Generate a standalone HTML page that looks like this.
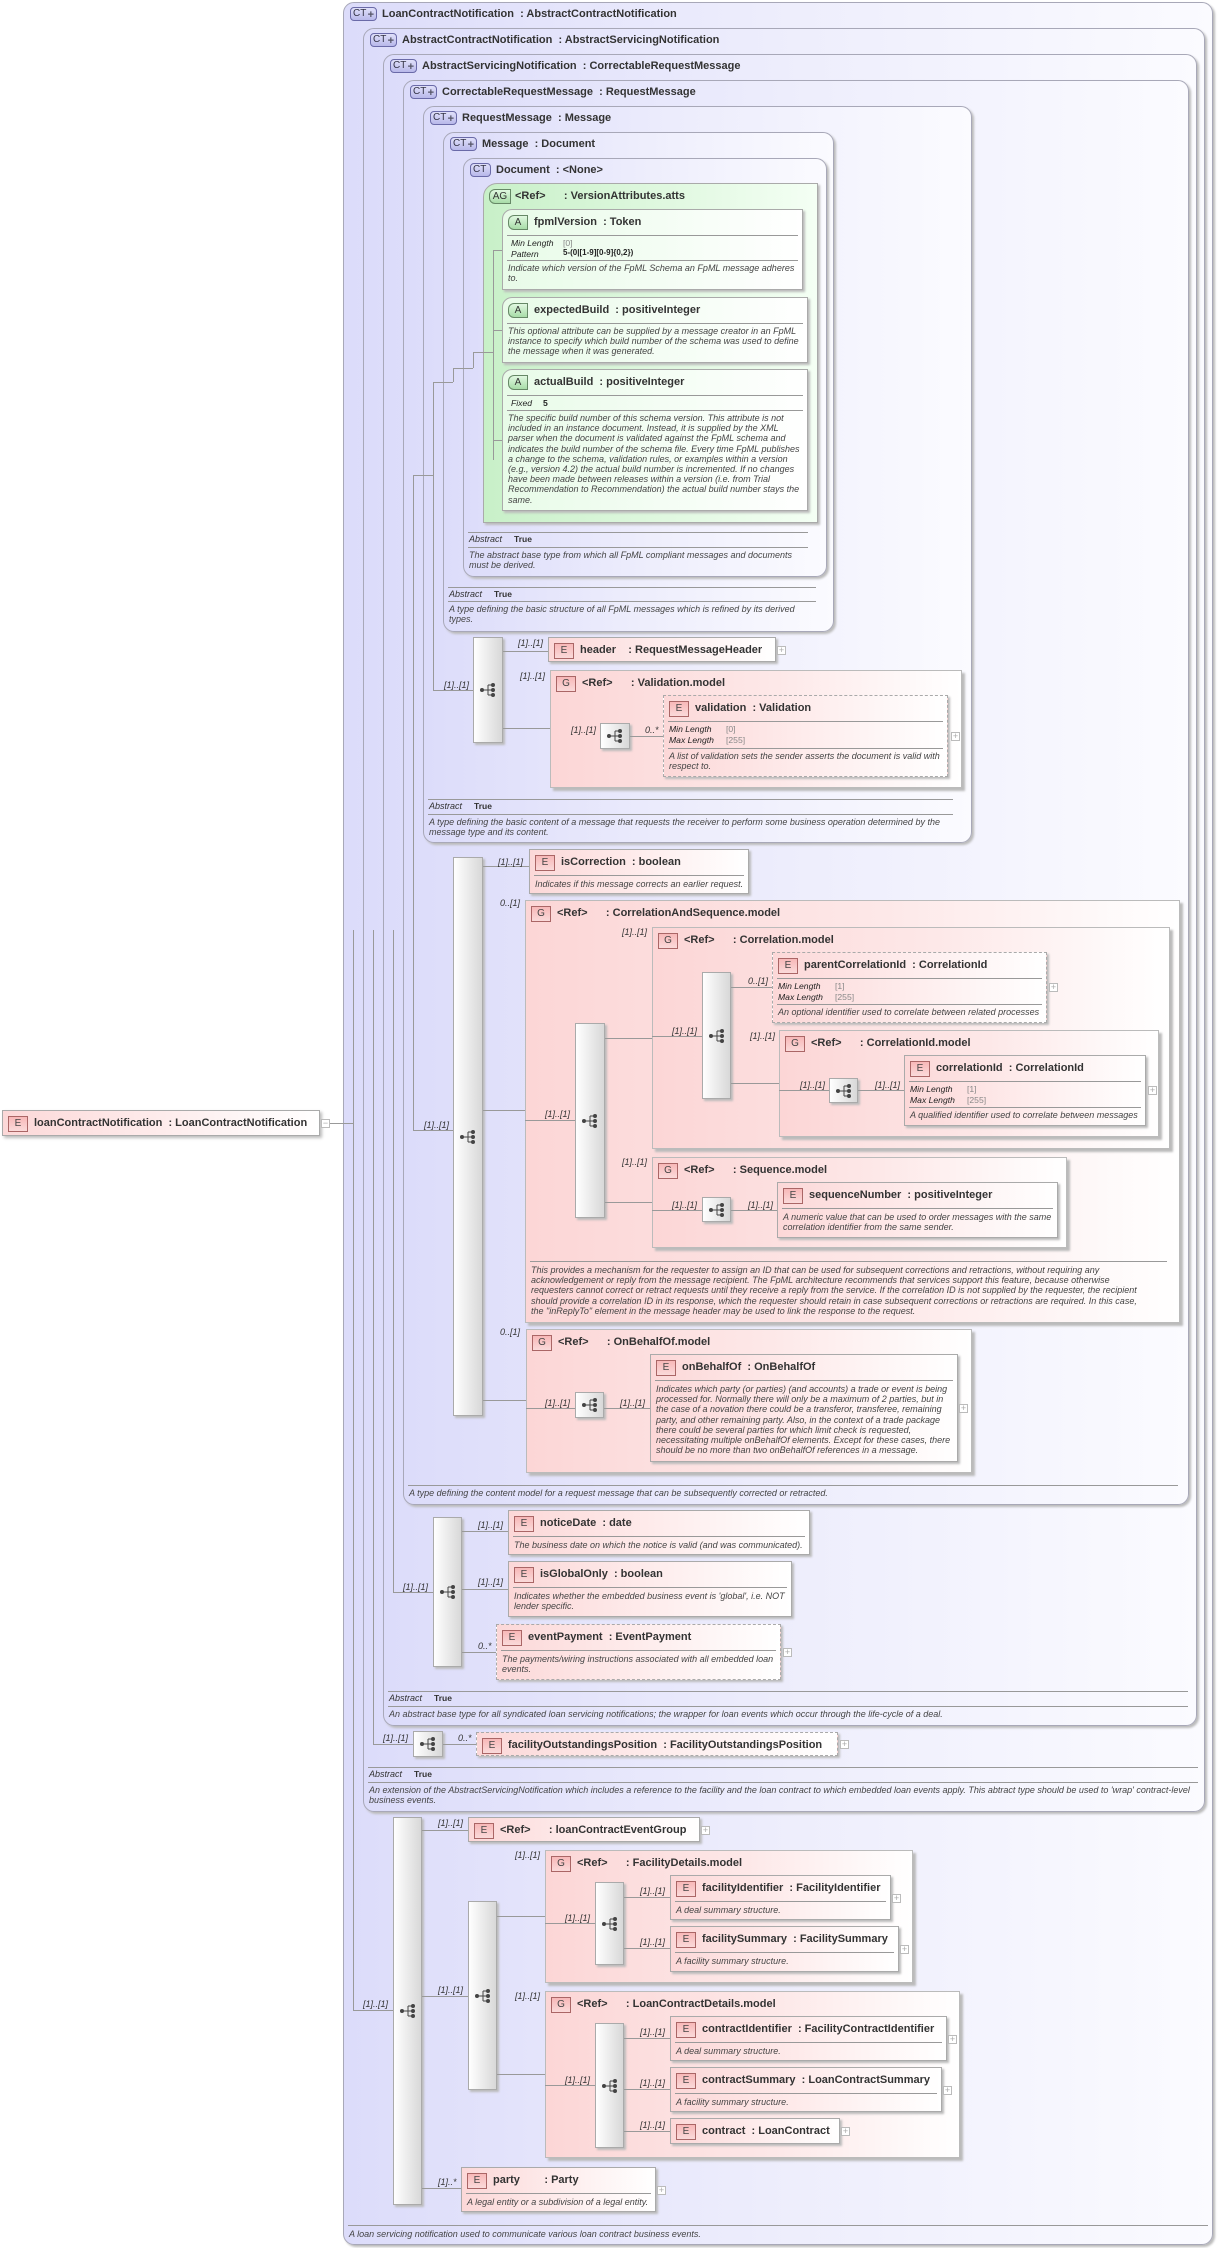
<!DOCTYPE html>
<html><head><meta charset="utf-8">
<style>
*{margin:0;padding:0;box-sizing:border-box}
body{width:1218px;height:2248px;background:#fff;position:relative;overflow:hidden;font-family:"Liberation Sans",sans-serif;color:#333}
div,span{position:absolute}
.ct{border:1px solid #a8a8b8;border-radius:11px;background:linear-gradient(90deg,#dcdcfa 0%,#ececfc 45%,#fbfbff 100%);box-shadow:2px 2px 2px #bbb}
.ctt{font-size:11px;font-weight:bold;white-space:nowrap;left:38px;top:5px}
.ctb{left:6px;top:4px;width:27px;height:14px;border:1px solid #6a6aa8;border-radius:4px;background:linear-gradient(#e0e0fa,#b8b8ea);font-size:10px;line-height:12px;color:#334;padding-left:2px}
.ctb i{position:absolute;right:2px;top:1px;font-style:normal;font-weight:bold;font-size:11px;color:#556}
.el{border:1px solid #aaa;background:linear-gradient(90deg,#fcd8d8 0%,#fef0f0 60%,#fff 100%);box-shadow:2px 2px 2px #bbb}
.dash{border:1px dashed #aaa}
.gr{border:1px solid #bbb;background:linear-gradient(90deg,#fcd6d6 0%,#fde8e8 55%,#fff 100%);box-shadow:3px 3px 2px #bbb}
.b{width:20px;height:16px;left:5px;top:5px;border:1px solid #a66;background:linear-gradient(#f8b8b8,#fadada);font-size:10px;line-height:14px;text-align:center;color:#444}
.t{font-size:11px;font-weight:bold;white-space:nowrap;left:31px;top:6px}
.hr{height:1px;background:#999;left:4px;right:4px}
.d{font-size:9px;font-style:italic;color:#444;line-height:10.2px;left:5px;right:5px}
.pl{font-size:8.6px;font-style:italic;color:#222;line-height:10.5px}
.pv{font-size:8.6px;color:#888;line-height:10.5px}
.seq{border:1px solid #aaa;background:linear-gradient(90deg,#fff,#d8d8d8);box-shadow:2px 2px 2px #bbb}
.seq svg{position:absolute;left:50%;top:50%;margin:-8px 0 0 -9px}
.lb{font-size:9px;font-style:italic;color:#333;white-space:nowrap}
.h{height:1px;background:#999}
.v{width:1px;background:#999}
.ab{font-size:9px;font-style:italic}
.ab b{font-style:normal;font-size:8.5px;margin-left:12px}
.plus{width:9px;height:9px;border:1px solid #bbb;background:#fff;font-size:9px;line-height:7px;text-align:center;color:#aaa}
.ag{border:1px solid #aaa;background:linear-gradient(90deg,#c8f0c8,#f4fff4);box-shadow:2px 2px 2px #bbb;border-radius:14px 0 0 0}
.att{border:1px solid #aaa;background:linear-gradient(90deg,#e8fbe8,#fff);box-shadow:2px 2px 2px #bbb;border-radius:10px 0 0 0}
.ab2{width:20px;height:15px;left:5px;top:5px;border:1px solid #686;border-radius:6px 0 0 6px;background:linear-gradient(#e0f8e0,#a8dca8);font-size:10px;line-height:13px;text-align:center;color:#333}
</style></head><body>

<div class="ct" style="left:343px;top:2px;width:870px;height:2243px"><span class="ctb">CT<i>+</i></span><span class="ctt">LoanContractNotification&nbsp; : AbstractContractNotification</span></div>
<div class="ct" style="left:363px;top:28px;width:842px;height:1784px"><span class="ctb">CT<i>+</i></span><span class="ctt">AbstractContractNotification&nbsp; : AbstractServicingNotification</span></div>
<div class="ct" style="left:383px;top:54px;width:814px;height:1672px"><span class="ctb">CT<i>+</i></span><span class="ctt">AbstractServicingNotification&nbsp; : CorrectableRequestMessage</span></div>
<div class="ct" style="left:403px;top:80px;width:786px;height:1425px"><span class="ctb">CT<i>+</i></span><span class="ctt">CorrectableRequestMessage&nbsp; : RequestMessage</span></div>
<div class="ct" style="left:423px;top:106px;width:549px;height:737px"><span class="ctb">CT<i>+</i></span><span class="ctt">RequestMessage&nbsp; : Message</span></div>
<div class="ct" style="left:443px;top:132px;width:391px;height:500px"><span class="ctb">CT<i>+</i></span><span class="ctt">Message&nbsp; : Document</span></div>
<div class="ct" style="left:463px;top:158px;width:364px;height:419px"><span class="ctb" style="width:21px">CT</span><span class="ctt" style="left:32px">Document&nbsp; : &lt;None&gt;</span></div>

<div class="ag" style="left:483px;top:183px;width:335px;height:340px"><span class="ab2" style="width:22px">AG</span><span class="t">&lt;Ref&gt;&nbsp;&nbsp;&nbsp;&nbsp;&nbsp; : VersionAttributes.atts</span></div>
<div class="att" style="left:502px;top:209px;width:301px;height:81px"><span class="ab2">A</span><span class="t">fpmlVersion&nbsp; : Token</span><div class="hr" style="top:25px"></div>
<span class="pl" style="left:8px;top:28px">Min Length<br>Pattern</span><span class="pv" style="left:60px;top:28px">[0]</span><span class="pv" style="left:60px;top:38px;color:#222;font-weight:bold;font-size:8px">5-(0|[1-9][0-9]{0,2})</span>
<div class="hr" style="top:50px"></div><span class="d" style="top:53px">Indicate which version of the FpML Schema an FpML message adheres to.</span></div>
<div class="att dash" style="left:502px;top:297px;width:306px;height:66px"><span class="ab2">A</span><span class="t">expectedBuild&nbsp; : positiveInteger</span><div class="hr" style="top:25px"></div>
<span class="d" style="top:28px">This optional attribute can be supplied by a message creator in an FpML instance to specify which build number of the schema was used to define the message when it was generated.</span></div>
<div class="att dash" style="left:502px;top:369px;width:306px;height:142px"><span class="ab2">A</span><span class="t">actualBuild&nbsp; : positiveInteger</span><div class="hr" style="top:25px"></div>
<span class="pl" style="left:8px;top:28px">Fixed</span><span class="pv" style="left:40px;top:28px;color:#222;font-weight:bold">5</span><div class="hr" style="top:40px"></div>
<span class="d" style="top:43px">The specific build number of this schema version. This attribute is not included in an instance document. Instead, it is supplied by the XML parser when the document is validated against the FpML schema and indicates the build number of the schema file. Every time FpML publishes a change to the schema, validation rules, or examples within a version (e.g., version 4.2) the actual build number is incremented. If no changes have been made between releases within a version (i.e. from Trial Recommendation to Recommendation) the actual build number stays the same.</span></div>
<div class="v" style="left:493px;top:250px;height:210px"></div>
<div class="h" style="left:493px;top:250px;width:9px"></div><div class="h" style="left:493px;top:330px;width:9px"></div><div class="h" style="left:493px;top:440px;width:9px"></div>
<div class="h" style="left:473px;top:352px;width:20px"></div><div class="v" style="left:473px;top:352px;height:16px"></div>
<div class="h" style="left:453px;top:368px;width:20px"></div><div class="v" style="left:453px;top:368px;height:14px"></div>
<div class="h" style="left:433px;top:382px;width:20px"></div><div class="v" style="left:433px;top:382px;height:10px"></div>
<div class="h" style="left:413px;top:475px;width:20px"></div>

<div class="h" style="left:468px;top:532px;width:340px"></div><span class="ab" style="left:469px;top:534px">Abstract<b>True</b></span><div class="h" style="left:468px;top:547px;width:340px"></div>
<span class="d" style="left:469px;top:550px;width:340px">The abstract base type from which all FpML compliant messages and documents must be derived.</span>
<div class="h" style="left:448px;top:587px;width:368px"></div><span class="ab" style="left:449px;top:589px">Abstract<b>True</b></span><div class="h" style="left:448px;top:601px;width:368px"></div>
<span class="d" style="left:449px;top:604px;width:368px">A type defining the basic structure of all FpML messages which is refined by its derived types.</span>

<div class="v" style="left:433px;top:392px;height:298px"></div>
<div class="h" style="left:433px;top:690px;width:40px"></div><span class="lb" style="left:444px;top:680px">[1]..[1]</span>
<div class="seq" style="left:473px;top:637px;width:30px;height:106px"><svg width="18" height="16"><circle cx="3" cy="8" r="2" fill="#444"/><path d="M3 8H9M9 3V13M9 3H14M9 8H14M9 13H14" stroke="#444" fill="none"/><circle cx="14" cy="3" r="2" fill="#444"/><circle cx="14" cy="8" r="2" fill="#444"/><circle cx="14" cy="13" r="2" fill="#444"/></svg></div>
<div class="h" style="left:503px;top:651px;width:45px"></div><span class="lb" style="left:518px;top:638px">[1]..[1]</span>
<div class="el" style="left:548px;top:637px;width:228px;height:25px"><span class="b">E</span><span class="t">header&nbsp;&nbsp;&nbsp; : RequestMessageHeader</span></div><span class="plus" style="left:777px;top:646px">+</span>
<div class="h" style="left:503px;top:728px;width:47px"></div><span class="lb" style="left:520px;top:671px">[1]..[1]</span>
<div class="gr" style="left:550px;top:670px;width:412px;height:118px"><span class="b">G</span><span class="t">&lt;Ref&gt;&nbsp;&nbsp;&nbsp;&nbsp;&nbsp; : Validation.model</span></div>
<span class="lb" style="left:571px;top:725px">[1]..[1]</span>
<div class="seq" style="left:600px;top:723px;width:30px;height:26px"><svg width="18" height="16"><circle cx="3" cy="8" r="2" fill="#444"/><path d="M3 8H9M9 3V13M9 3H14M9 8H14M9 13H14" stroke="#444" fill="none"/><circle cx="14" cy="3" r="2" fill="#444"/><circle cx="14" cy="8" r="2" fill="#444"/><circle cx="14" cy="13" r="2" fill="#444"/></svg></div>
<div class="h" style="left:630px;top:736px;width:33px"></div><span class="lb" style="left:645px;top:725px">0..*</span>
<div class="el dash" style="left:663px;top:695px;width:285px;height:82px"><span class="b">E</span><span class="t">validation&nbsp; : Validation</span><div class="hr" style="top:25px"></div>
<span class="pl" style="left:5px;top:28px">Min Length<br>Max Length</span><span class="pv" style="left:62px;top:28px">[0]<br>[255]</span><div class="hr" style="top:52px"></div>
<span class="d" style="top:55px">A list of validation sets the sender asserts the document is valid with respect to.</span></div><span class="plus" style="left:951px;top:732px">+</span>
<div class="h" style="left:428px;top:799px;width:525px"></div><span class="ab" style="left:429px;top:801px">Abstract<b>True</b></span><div class="h" style="left:428px;top:814px;width:525px"></div>
<span class="d" style="left:429px;top:817px;width:530px">A type defining the basic content of a message that requests the receiver to perform some business operation determined by the message type and its content.</span>

<div class="v" style="left:413px;top:475px;height:655px"></div>
<div class="h" style="left:413px;top:1130px;width:40px"></div><span class="lb" style="left:424px;top:1120px">[1]..[1]</span>
<div class="seq" style="left:453px;top:857px;width:30px;height:559px"><svg width="18" height="16"><circle cx="3" cy="8" r="2" fill="#444"/><path d="M3 8H9M9 3V13M9 3H14M9 8H14M9 13H14" stroke="#444" fill="none"/><circle cx="14" cy="3" r="2" fill="#444"/><circle cx="14" cy="8" r="2" fill="#444"/><circle cx="14" cy="13" r="2" fill="#444"/></svg></div>
<div class="h" style="left:483px;top:866px;width:46px"></div><span class="lb" style="left:498px;top:857px">[1]..[1]</span>
<div class="el" style="left:529px;top:849px;width:220px;height:45px"><span class="b">E</span><span class="t">isCorrection&nbsp; : boolean</span><div class="hr" style="top:25px"></div><span class="d" style="top:29px;white-space:nowrap">Indicates if this message corrects an earlier request.</span></div>
<div class="h" style="left:483px;top:1110px;width:42px"></div><span class="lb" style="left:500px;top:898px">0..[1]</span>
<div class="gr dash" style="left:525px;top:900px;width:655px;height:423px"><span class="b">G</span><span class="t">&lt;Ref&gt;&nbsp;&nbsp;&nbsp;&nbsp;&nbsp; : CorrelationAndSequence.model</span>
<div class="hr" style="top:360px;left:4px;right:12px"></div>
<span class="d" style="top:364px;right:40px">This provides a mechanism for the requester to assign an ID that can be used for subsequent corrections and retractions, without requiring any acknowledgement or reply from the message recipient. The FpML architecture recommends that services support this feature, because otherwise requesters cannot correct or retract requests until they receive a reply from the service. If the correlation ID is not supplied by the requester, the recipient should provide a correlation ID in its response, which the requester should retain in case subsequent corrections or retractions are required. In this case, the "inReplyTo" element in the message header may be used to link the response to the request.</span></div>
<div class="h" style="left:525px;top:1120px;width:50px"></div><span class="lb" style="left:545px;top:1109px">[1]..[1]</span>
<div class="seq" style="left:575px;top:1023px;width:30px;height:195px"><svg width="18" height="16"><circle cx="3" cy="8" r="2" fill="#444"/><path d="M3 8H9M9 3V13M9 3H14M9 8H14M9 13H14" stroke="#444" fill="none"/><circle cx="14" cy="3" r="2" fill="#444"/><circle cx="14" cy="8" r="2" fill="#444"/><circle cx="14" cy="13" r="2" fill="#444"/></svg></div>
<div class="h" style="left:605px;top:1038px;width:47px"></div><span class="lb" style="left:622px;top:927px">[1]..[1]</span>
<div class="gr" style="left:652px;top:927px;width:518px;height:222px"><span class="b">G</span><span class="t">&lt;Ref&gt;&nbsp;&nbsp;&nbsp;&nbsp;&nbsp; : Correlation.model</span></div>
<div class="h" style="left:652px;top:1036px;width:50px"></div><span class="lb" style="left:672px;top:1026px">[1]..[1]</span>
<div class="seq" style="left:702px;top:972px;width:29px;height:127px"><svg width="18" height="16"><circle cx="3" cy="8" r="2" fill="#444"/><path d="M3 8H9M9 3V13M9 3H14M9 8H14M9 13H14" stroke="#444" fill="none"/><circle cx="14" cy="3" r="2" fill="#444"/><circle cx="14" cy="8" r="2" fill="#444"/><circle cx="14" cy="13" r="2" fill="#444"/></svg></div>
<div class="h" style="left:731px;top:987px;width:41px"></div><span class="lb" style="left:748px;top:976px">0..[1]</span>
<div class="el dash" style="left:772px;top:952px;width:275px;height:71px"><span class="b">E</span><span class="t">parentCorrelationId&nbsp; : CorrelationId</span><div class="hr" style="top:25px"></div>
<span class="pl" style="left:5px;top:28px">Min Length<br>Max Length</span><span class="pv" style="left:62px;top:28px">[1]<br>[255]</span><div class="hr" style="top:51px"></div>
<span class="d" style="top:54px">An optional identifier used to correlate between related processes</span></div><span class="plus" style="left:1049px;top:983px">+</span>
<div class="h" style="left:731px;top:1083px;width:48px"></div><span class="lb" style="left:750px;top:1031px">[1]..[1]</span>
<div class="gr" style="left:779px;top:1030px;width:380px;height:107px"><span class="b">G</span><span class="t">&lt;Ref&gt;&nbsp;&nbsp;&nbsp;&nbsp;&nbsp; : CorrelationId.model</span></div>
<div class="h" style="left:779px;top:1090px;width:50px"></div><span class="lb" style="left:800px;top:1080px">[1]..[1]</span>
<div class="seq" style="left:829px;top:1078px;width:29px;height:25px"><svg width="18" height="16"><circle cx="3" cy="8" r="2" fill="#444"/><path d="M3 8H9M9 3V13M9 3H14M9 8H14M9 13H14" stroke="#444" fill="none"/><circle cx="14" cy="3" r="2" fill="#444"/><circle cx="14" cy="8" r="2" fill="#444"/><circle cx="14" cy="13" r="2" fill="#444"/></svg></div>
<div class="h" style="left:858px;top:1090px;width:46px"></div><span class="lb" style="left:875px;top:1080px">[1]..[1]</span>
<div class="el" style="left:904px;top:1055px;width:242px;height:71px"><span class="b">E</span><span class="t">correlationId&nbsp; : CorrelationId</span><div class="hr" style="top:25px"></div>
<span class="pl" style="left:5px;top:28px">Min Length<br>Max Length</span><span class="pv" style="left:62px;top:28px">[1]<br>[255]</span><div class="hr" style="top:51px"></div>
<span class="d" style="top:54px">A qualified identifier used to correlate between messages</span></div><span class="plus" style="left:1148px;top:1086px">+</span>
<div class="h" style="left:605px;top:1202px;width:47px"></div><span class="lb" style="left:622px;top:1157px">[1]..[1]</span>
<div class="gr" style="left:652px;top:1157px;width:415px;height:91px"><span class="b">G</span><span class="t">&lt;Ref&gt;&nbsp;&nbsp;&nbsp;&nbsp;&nbsp; : Sequence.model</span></div>
<div class="h" style="left:652px;top:1210px;width:50px"></div><span class="lb" style="left:672px;top:1200px">[1]..[1]</span>
<div class="seq" style="left:702px;top:1197px;width:29px;height:25px"><svg width="18" height="16"><circle cx="3" cy="8" r="2" fill="#444"/><path d="M3 8H9M9 3V13M9 3H14M9 8H14M9 13H14" stroke="#444" fill="none"/><circle cx="14" cy="3" r="2" fill="#444"/><circle cx="14" cy="8" r="2" fill="#444"/><circle cx="14" cy="13" r="2" fill="#444"/></svg></div>
<div class="h" style="left:731px;top:1210px;width:46px"></div><span class="lb" style="left:748px;top:1200px">[1]..[1]</span>
<div class="el" style="left:777px;top:1182px;width:281px;height:56px"><span class="b">E</span><span class="t">sequenceNumber&nbsp; : positiveInteger</span><div class="hr" style="top:25px"></div>
<span class="d" style="top:29px">A numeric value that can be used to order messages with the same correlation identifier from the same sender.</span></div>

<div class="h" style="left:483px;top:1400px;width:43px"></div><span class="lb" style="left:500px;top:1327px">0..[1]</span>
<div class="gr dash" style="left:526px;top:1329px;width:446px;height:144px"><span class="b">G</span><span class="t">&lt;Ref&gt;&nbsp;&nbsp;&nbsp;&nbsp;&nbsp; : OnBehalfOf.model</span></div>
<div class="h" style="left:526px;top:1408px;width:49px"></div><span class="lb" style="left:545px;top:1398px">[1]..[1]</span>
<div class="seq" style="left:575px;top:1392px;width:29px;height:26px"><svg width="18" height="16"><circle cx="3" cy="8" r="2" fill="#444"/><path d="M3 8H9M9 3V13M9 3H14M9 8H14M9 13H14" stroke="#444" fill="none"/><circle cx="14" cy="3" r="2" fill="#444"/><circle cx="14" cy="8" r="2" fill="#444"/><circle cx="14" cy="13" r="2" fill="#444"/></svg></div>
<div class="h" style="left:604px;top:1408px;width:46px"></div><span class="lb" style="left:620px;top:1398px">[1]..[1]</span>
<div class="el" style="left:650px;top:1354px;width:308px;height:108px"><span class="b">E</span><span class="t">onBehalfOf&nbsp; : OnBehalfOf</span><div class="hr" style="top:25px"></div>
<span class="d" style="top:29px">Indicates which party (or parties) (and accounts) a trade or event is being processed for. Normally there will only be a maximum of 2 parties, but in the case of a novation there could be a transferor, transferee, remaining party, and other remaining party. Also, in the context of a trade package there could be several parties for which limit check is requested, necessitating multiple onBehalfOf elements. Except for these cases, there should be no more than two onBehalfOf references in a message.</span></div><span class="plus" style="left:959px;top:1404px">+</span>
<div class="h" style="left:408px;top:1485px;width:770px"></div>
<span class="d" style="left:409px;top:1488px;width:700px">A type defining the content model for a request message that can be subsequently corrected or retracted.</span>

<div class="v" style="left:393px;top:930px;height:662px"></div>
<div class="h" style="left:393px;top:1592px;width:40px"></div><span class="lb" style="left:403px;top:1582px">[1]..[1]</span>
<div class="seq" style="left:433px;top:1517px;width:29px;height:150px"><svg width="18" height="16"><circle cx="3" cy="8" r="2" fill="#444"/><path d="M3 8H9M9 3V13M9 3H14M9 8H14M9 13H14" stroke="#444" fill="none"/><circle cx="14" cy="3" r="2" fill="#444"/><circle cx="14" cy="8" r="2" fill="#444"/><circle cx="14" cy="13" r="2" fill="#444"/></svg></div>
<div class="h" style="left:462px;top:1531px;width:46px"></div><span class="lb" style="left:478px;top:1520px">[1]..[1]</span>
<div class="el" style="left:508px;top:1510px;width:302px;height:45px"><span class="b">E</span><span class="t">noticeDate&nbsp; : date</span><div class="hr" style="top:25px"></div><span class="d" style="top:29px">The business date on which the notice is valid (and was communicated).</span></div>
<div class="h" style="left:462px;top:1589px;width:46px"></div><span class="lb" style="left:478px;top:1577px">[1]..[1]</span>
<div class="el" style="left:508px;top:1561px;width:284px;height:56px"><span class="b">E</span><span class="t">isGlobalOnly&nbsp; : boolean</span><div class="hr" style="top:25px"></div><span class="d" style="top:29px">Indicates whether the embedded business event is 'global', i.e. NOT lender specific.</span></div>
<div class="h" style="left:462px;top:1652px;width:34px"></div><span class="lb" style="left:478px;top:1641px">0..*</span>
<div class="el dash" style="left:496px;top:1624px;width:285px;height:56px"><span class="b">E</span><span class="t">eventPayment&nbsp; : EventPayment</span><div class="hr" style="top:25px"></div><span class="d" style="top:29px">The payments/wiring instructions associated with all embedded loan events.</span></div><span class="plus" style="left:783px;top:1648px">+</span>
<div class="h" style="left:388px;top:1691px;width:800px"></div><span class="ab" style="left:389px;top:1693px">Abstract<b>True</b></span><div class="h" style="left:388px;top:1706px;width:800px"></div>
<span class="d" style="left:389px;top:1709px;width:800px">An abstract base type for all syndicated loan servicing notifications; the wrapper for loan events which occur through the life-cycle of a deal.</span>

<div class="v" style="left:373px;top:930px;height:814px"></div>
<div class="h" style="left:373px;top:1744px;width:40px"></div><span class="lb" style="left:383px;top:1733px">[1]..[1]</span>
<div class="seq" style="left:413px;top:1731px;width:30px;height:26px"><svg width="18" height="16"><circle cx="3" cy="8" r="2" fill="#444"/><path d="M3 8H9M9 3V13M9 3H14M9 8H14M9 13H14" stroke="#444" fill="none"/><circle cx="14" cy="3" r="2" fill="#444"/><circle cx="14" cy="8" r="2" fill="#444"/><circle cx="14" cy="13" r="2" fill="#444"/></svg></div>
<div class="h" style="left:443px;top:1744px;width:33px"></div><span class="lb" style="left:458px;top:1733px">0..*</span>
<div class="el dash" style="left:476px;top:1732px;width:362px;height:24px"><span class="b">E</span><span class="t">facilityOutstandingsPosition&nbsp; : FacilityOutstandingsPosition</span></div><span class="plus" style="left:840px;top:1740px">+</span>
<div class="h" style="left:368px;top:1767px;width:830px"></div><span class="ab" style="left:369px;top:1769px">Abstract<b>True</b></span><div class="h" style="left:368px;top:1782px;width:830px"></div>
<span class="d" style="left:369px;top:1785px;width:825px">An extension of the AbstractServicingNotification which includes a reference to the facility and the loan contract to which embedded loan events apply. This abtract type should be used to 'wrap' contract-level business events.</span>

<div class="v" style="left:353px;top:930px;height:1080px"></div>
<div class="h" style="left:329px;top:1123px;width:24px"></div>
<div class="h" style="left:353px;top:2010px;width:40px"></div><span class="lb" style="left:363px;top:1999px">[1]..[1]</span>
<div class="seq" style="left:393px;top:1817px;width:29px;height:388px"><svg width="18" height="16"><circle cx="3" cy="8" r="2" fill="#444"/><path d="M3 8H9M9 3V13M9 3H14M9 8H14M9 13H14" stroke="#444" fill="none"/><circle cx="14" cy="3" r="2" fill="#444"/><circle cx="14" cy="8" r="2" fill="#444"/><circle cx="14" cy="13" r="2" fill="#444"/></svg></div>
<div class="h" style="left:422px;top:1830px;width:46px"></div><span class="lb" style="left:438px;top:1818px">[1]..[1]</span>
<div class="el" style="left:468px;top:1817px;width:232px;height:25px"><span class="b">E</span><span class="t">&lt;Ref&gt;&nbsp;&nbsp;&nbsp;&nbsp;&nbsp; : loanContractEventGroup</span></div><span class="plus" style="left:701px;top:1826px">+</span>
<div class="h" style="left:422px;top:1996px;width:46px"></div><span class="lb" style="left:438px;top:1985px">[1]..[1]</span>
<div class="seq" style="left:468px;top:1901px;width:29px;height:189px"><svg width="18" height="16"><circle cx="3" cy="8" r="2" fill="#444"/><path d="M3 8H9M9 3V13M9 3H14M9 8H14M9 13H14" stroke="#444" fill="none"/><circle cx="14" cy="3" r="2" fill="#444"/><circle cx="14" cy="8" r="2" fill="#444"/><circle cx="14" cy="13" r="2" fill="#444"/></svg></div>
<div class="h" style="left:497px;top:1916px;width:48px"></div><span class="lb" style="left:515px;top:1850px">[1]..[1]</span>
<div class="gr" style="left:545px;top:1850px;width:368px;height:133px"><span class="b">G</span><span class="t">&lt;Ref&gt;&nbsp;&nbsp;&nbsp;&nbsp;&nbsp; : FacilityDetails.model</span></div>
<div class="h" style="left:545px;top:1923px;width:50px"></div><span class="lb" style="left:565px;top:1913px">[1]..[1]</span>
<div class="seq" style="left:595px;top:1882px;width:29px;height:83px"><svg width="18" height="16"><circle cx="3" cy="8" r="2" fill="#444"/><path d="M3 8H9M9 3V13M9 3H14M9 8H14M9 13H14" stroke="#444" fill="none"/><circle cx="14" cy="3" r="2" fill="#444"/><circle cx="14" cy="8" r="2" fill="#444"/><circle cx="14" cy="13" r="2" fill="#444"/></svg></div>
<div class="h" style="left:624px;top:1897px;width:46px"></div><span class="lb" style="left:640px;top:1886px">[1]..[1]</span>
<div class="el" style="left:670px;top:1875px;width:221px;height:45px"><span class="b">E</span><span class="t">facilityIdentifier&nbsp; : FacilityIdentifier</span><div class="hr" style="top:25px"></div><span class="d" style="top:29px">A deal summary structure.</span></div><span class="plus" style="left:892px;top:1894px">+</span>
<div class="h" style="left:624px;top:1948px;width:46px"></div><span class="lb" style="left:640px;top:1937px">[1]..[1]</span>
<div class="el" style="left:670px;top:1926px;width:229px;height:46px"><span class="b">E</span><span class="t">facilitySummary&nbsp; : FacilitySummary</span><div class="hr" style="top:25px"></div><span class="d" style="top:29px">A facility summary structure.</span></div><span class="plus" style="left:900px;top:1945px">+</span>
<div class="h" style="left:497px;top:2074px;width:48px"></div><span class="lb" style="left:515px;top:1991px">[1]..[1]</span>
<div class="gr" style="left:545px;top:1991px;width:415px;height:167px"><span class="b">G</span><span class="t">&lt;Ref&gt;&nbsp;&nbsp;&nbsp;&nbsp;&nbsp; : LoanContractDetails.model</span></div>
<div class="h" style="left:545px;top:2085px;width:50px"></div><span class="lb" style="left:565px;top:2075px">[1]..[1]</span>
<div class="seq" style="left:595px;top:2023px;width:29px;height:125px"><svg width="18" height="16"><circle cx="3" cy="8" r="2" fill="#444"/><path d="M3 8H9M9 3V13M9 3H14M9 8H14M9 13H14" stroke="#444" fill="none"/><circle cx="14" cy="3" r="2" fill="#444"/><circle cx="14" cy="8" r="2" fill="#444"/><circle cx="14" cy="13" r="2" fill="#444"/></svg></div>
<div class="h" style="left:624px;top:2038px;width:46px"></div><span class="lb" style="left:640px;top:2027px">[1]..[1]</span>
<div class="el" style="left:670px;top:2016px;width:277px;height:45px"><span class="b">E</span><span class="t">contractIdentifier&nbsp; : FacilityContractIdentifier</span><div class="hr" style="top:25px"></div><span class="d" style="top:29px">A deal summary structure.</span></div><span class="plus" style="left:948px;top:2035px">+</span>
<div class="h" style="left:624px;top:2089px;width:46px"></div><span class="lb" style="left:640px;top:2078px">[1]..[1]</span>
<div class="el" style="left:670px;top:2067px;width:272px;height:45px"><span class="b">E</span><span class="t">contractSummary&nbsp; : LoanContractSummary</span><div class="hr" style="top:25px"></div><span class="d" style="top:29px">A facility summary structure.</span></div><span class="plus" style="left:943px;top:2086px">+</span>
<div class="h" style="left:624px;top:2131px;width:46px"></div><span class="lb" style="left:640px;top:2120px">[1]..[1]</span>
<div class="el" style="left:670px;top:2118px;width:170px;height:26px"><span class="b">E</span><span class="t">contract&nbsp; : LoanContract</span></div><span class="plus" style="left:841px;top:2127px">+</span>
<div class="h" style="left:422px;top:2188px;width:39px"></div><span class="lb" style="left:438px;top:2177px">[1]..*</span>
<div class="el" style="left:461px;top:2167px;width:195px;height:45px"><span class="b">E</span><span class="t">party&nbsp;&nbsp;&nbsp;&nbsp;&nbsp;&nbsp;&nbsp; : Party</span><div class="hr" style="top:25px"></div><span class="d" style="top:29px">A legal entity or a subdivision of a legal entity.</span></div><span class="plus" style="left:657px;top:2186px">+</span>
<div class="h" style="left:348px;top:2225px;width:860px"></div>
<span class="d" style="left:349px;top:2229px;width:700px">A loan servicing notification used to communicate various loan contract business events.</span>

<div class="el" style="left:2px;top:1110px;width:318px;height:26px;box-shadow:2px 2px 3px #bbb"><span class="b">E</span><span class="t">loanContractNotification&nbsp; : LoanContractNotification</span></div>
<span class="plus" style="left:321px;top:1119px">−</span>
</body></html>
